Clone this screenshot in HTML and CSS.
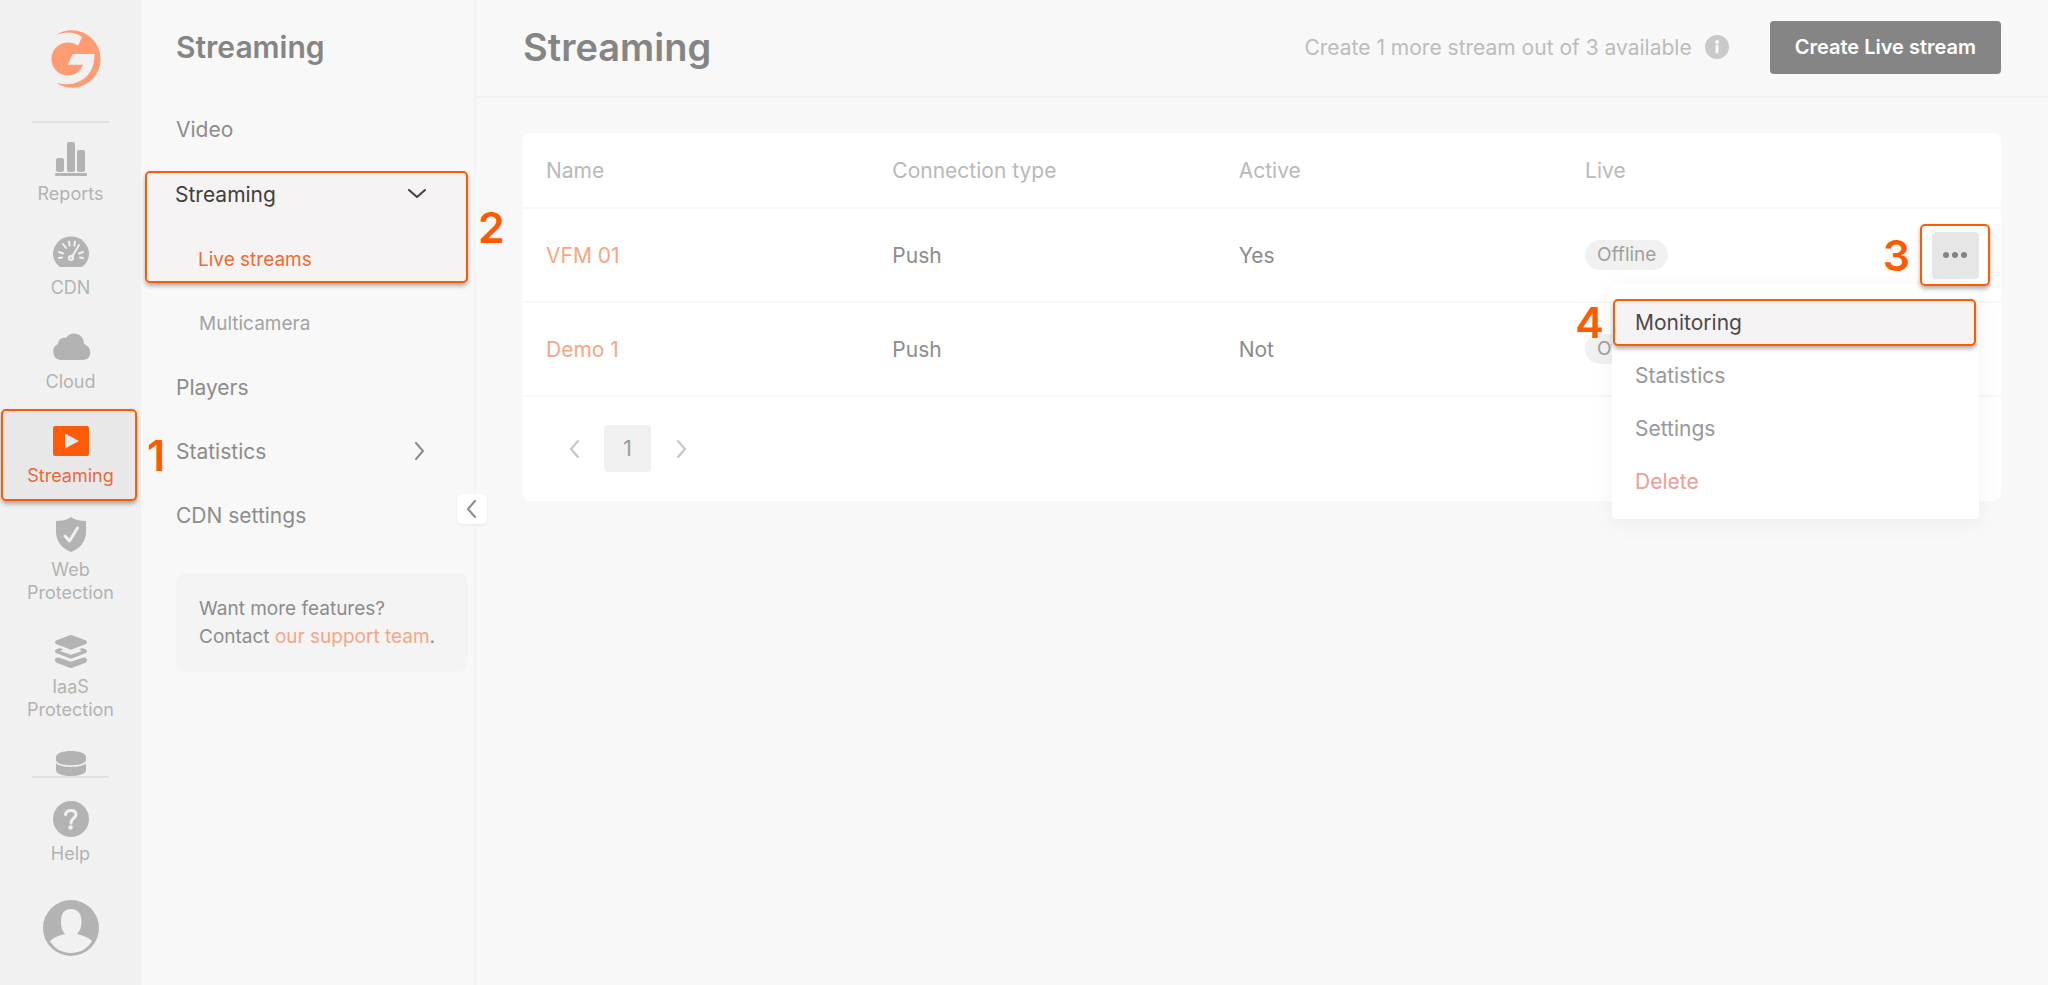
FILE: index.html
```html
<!DOCTYPE html>
<html lang="en">
<head>
    <meta charset="UTF-8">
    <meta name="viewport" content="width=device-width, initial-scale=1.0">
    <title>Streaming</title>
    <link rel="stylesheet" href="styles.css">
</head>
<body>
    <div class="container">

        <!-- ----------- Product rail ------------ -->
        <nav class="rail" aria-label="Products">
            <a href="#" class="logo" aria-label="Home">
                <svg viewBox="150 88 154 178"><path d="M168 106C183 95 200 92 215 92A85 85 0 0 1 300 177A85 85 0 0 1 215 262C196 262 181 256 170 248C226 262 283 235 282 162L217 162L203 194L248 194C240 215 222 226 203 226A49 49 0 0 1 154 177A49 49 0 0 1 203 128C215 128 225 131 233 138L245 112C225 96 195 94 168 106Z"/></svg>
            </a>
            <div class="rail-list">
                <a href="#" class="rail-item">
                    <svg viewBox="0 0 36 36"><rect x="3" y="17" width="8" height="14" rx="2"/><rect x="14" y="1" width="8" height="30" rx="2"/><rect x="24" y="9" width="8" height="22" rx="2"/><rect x="2" y="32" width="32" height="3" rx="1"/></svg>
                    <span>Reports</span>
                </a>
                <a href="#" class="rail-item">
                    <svg viewBox="0 0 36 36"><path d="M7 32C3 29 0 24 0 19A18 17.500 0 0 1 36 19C36 24 33 29 29 32Z"/><g class="cut"><path d="M6 23l3-.5M6 17l4 1.500M10 9l3 4M16 6.500l.6 4M22 6.500l-.7 4M30 23l-3-.5M30 17l-4 1.500"/><path d="M26 10l-7 12"/><circle cx="18" cy="23" r="2"/></g></svg>
                    <span>CDN</span>
                </a>
                <a href="#" class="rail-item">
                    <svg class="wide" viewBox="0 0 40 36"><path d="M9 31A8.500 8.500 0 0 1 7 15C7 11 11 8 15 9C20 1 33 4 33 15C42 18 41 31 32 31Z"/></svg>
                    <span>Cloud</span>
                </a>
                <a href="#" class="rail-item active marked">
                    <svg viewBox="0 0 36 36"><path fill-rule="evenodd" d="M2 3H34Q36 3 36 5V31Q36 33 34 33H2Q0 33 0 31V5Q0 3 2 3ZM12 10.500V25.500L26 18Z"/></svg>
                    <span>Streaming</span>
                    <b class="step step-1">1</b>
                </a>
                <a href="#" class="rail-item">
                    <svg viewBox="0 0 36 36"><path d="M18 0C22 3 28 4 33 4V15C33 25 26 32 18 35C10 32 3 25 3 15V4C8 4 14 3 18 0Z"/><path class="cut check" d="M12 19l4.500 5L24.500 11"/></svg>
                    <span>Web<br>Protection</span>
                </a>
                <a href="#" class="rail-item">
                    <svg viewBox="0 0 36 36"><path d="M16 1.500Q18 .5 20 1.500L33 6.500Q35 8 33 10L20 15Q18 16 16 15L3 10Q1 8 3 6.500Z"/><path d="M7 14L3 15.500Q1 17 3 19L16 24Q18 25 20 24L33 19Q35 17 33 15.500L29 14L26 15.500L29 17L19 20.500Q18 21 17 20.500L7 17L10 15.500Z"/><path d="M3 24Q5 23 7 24L16 27Q18 28 20 27L29 24Q31 23 33 24Q35 26 33 28.500L20 33.500Q18 34.500 16 33.500L3 28.500Q1 26 3 24Z"/></svg>
                    <span>IaaS<br>Protection</span>
                </a>
                <a href="#" class="rail-item">
                    <svg viewBox="0 0 36 36"><path d="M3 6C3 -2 33 -2 33 6V9C33 16 3 16 3 9Z"/><path d="M3 12.500C8 17 28 17 33 12.500V19C33 27 3 27 3 19Z"/></svg>
                    <span>Storage</span>
                </a>
            </div>
            <a href="#" class="rail-item help">
                <svg viewBox="0 0 36 36"><circle cx="18" cy="18" r="18"/><path class="cut question" d="M12.500 13.500C13 8 23 8 23 13.500C23 17 18 17.500 18 22"/><circle class="dot" cx="17.500" cy="26.500" r="2.200"/></svg>
                <span>Help</span>
            </a>
            <button type="button" class="avatar" aria-label="Account">
                <svg viewBox="0 0 56 56"><circle cx="28" cy="28" r="28"/><path class="face" d="M28 9C35 9 38.500 14 38.500 22C38.500 27 37 31 34 34C39 35 45 37 49 41C45 48 38 53 28 53C18 53 11 48 7 41C11 37 17 35 22 34C19 31 18 27 18 22C18 14 21 9 28 9Z"/></svg>
            </button>
        </nav>

        <!-- ----------- Sidebar ------------ -->
        <aside class="sidebar">
            <h2>Streaming</h2>
            <nav class="menu" aria-label="Streaming">
                <a href="#">Video</a>
                <div class="group marked">
                    <button type="button" aria-expanded="true">Streaming
                        <svg class="chevron" viewBox="0 0 18 18"><path d="M1 5l8 7 8-7"/></svg>
                    </button>
                    <a href="#" class="sub current">Live streams</a>
                    <b class="step step-2">2</b>
                </div>
                <a href="#" class="sub">Multicamera</a>
                <a href="#">Players</a>
                <button type="button" aria-expanded="false">Statistics
                    <svg class="chevron" viewBox="0 0 18 18"><path d="M6 1l7 8-7 8"/></svg>
                </button>
                <a href="#">CDN settings</a>
            </nav>
            <p class="support">Want more features?<br>Contact <a href="#">our support team</a>.</p>
            <button type="button" class="collapse" aria-label="Collapse menu">
                <svg class="chevron" viewBox="0 0 18 18"><path d="M12 1L5 9l7 8"/></svg>
            </button>
        </aside>

        <!-- ----------- Content ------------ -->
        <main class="content">
            <header class="topbar">
                <h1>Streaming</h1>
                <p class="quota">Create 1 more stream out of 3 available
                    <svg viewBox="0 0 24 24"><circle cx="12" cy="12" r="12"/><path class="cut" d="M12 11v6"/><circle class="dot" cx="12" cy="7" r="2"/></svg>
                </p>
                <button type="button" class="create">Create Live stream</button>
            </header>

            <section class="card">
                <table>
                    <thead>
                        <tr>
                            <th>Name</th>
                            <th>Connection type</th>
                            <th>Active</th>
                            <th class="live">Live</th>
                        </tr>
                    </thead>
                    <tbody>
                        <tr>
                            <td><a href="#">VFM 01</a></td>
                            <td>Push</td>
                            <td>Yes</td>
                            <td class="live">
                                <div class="live-cell">
                                    <span class="badge">Offline</span>
                                    <div class="actions">
                                        <div class="more-box marked">
                                            <button type="button" class="more" aria-label="Actions" aria-expanded="true">
                                                <svg viewBox="0 0 24 8"><circle cx="3" cy="4" r="3"/><circle cx="12" cy="4" r="3"/><circle cx="21" cy="4" r="3"/></svg>
                                            </button>
                                            <b class="step step-3">3</b>
                                        </div>
                                        <div class="dropdown">
                                            <button type="button" class="picked marked">Monitoring<b class="step step-4">4</b></button>
                                            <button type="button">Statistics</button>
                                            <button type="button">Settings</button>
                                            <button type="button" class="delete">Delete</button>
                                        </div>
                                    </div>
                                </div>
                            </td>
                        </tr>
                        <tr>
                            <td><a href="#">Demo 1</a></td>
                            <td>Push</td>
                            <td>Not</td>
                            <td class="live"><span class="badge">Offline</span></td>
                        </tr>
                    </tbody>
                </table>
                <div class="pagination">
                    <button type="button" aria-label="Previous page"><svg class="chevron" viewBox="0 0 18 18"><path d="M12 1L5 9l7 8"/></svg></button>
                    <button type="button" class="page">1</button>
                    <button type="button" aria-label="Next page"><svg class="chevron" viewBox="0 0 18 18"><path d="M6 1l7 8-7 8"/></svg></button>
                </div>
            </section>
        </main>
    </div>
</body>
</html>
```
FILE: styles.css
```css
*{
    margin: 0;
    padding: 0;
    box-sizing: border-box;
}
body{
    font-family: Inter, "Liberation Sans", sans-serif;
    font-size: 21px;
    color: #8c8c8c;
    background-color: #f8f8f8;
}
a{
    color: inherit;
    text-decoration: none;
}
button{
    font: inherit;
    color: inherit;
    background: none;
    border: none;
    cursor: pointer;
}
svg{
    display: block;
    flex-shrink: 0;
}
.container{
    display: flex;
    height: 100vh;
}
.chevron{
    width: 18px;
    height: 18px;
    fill: none;
    stroke: currentColor;
    stroke-width: 2;
    stroke-linecap: round;
    stroke-linejoin: round;
}

/* numbered highlights */
.marked{
    position: relative;
    border: 2px solid #ff5a00;
    border-radius: 5px;
    box-shadow: 0 3px 4px rgba(0, 0, 0, 0.3);
}
.step{
    position: absolute;
    font-size: 43px;
    line-height: 52px;
    font-weight: 600;
    color: #ff5a00;
}
.step-1{
    left: 144px;
    top: 18px;
}
.step-2{
    left: 331px;
    top: 28px;
}
.step-3{
    right: 78px;
    top: 3px;
}
.step-4{
    right: 370px;
    top: -5px;
}

/* rail */
.rail{
    display: flex;
    flex-direction: column;
    align-items: center;
    width: 141px;
    flex-shrink: 0;
    background-color: #f1f1f1;
    color: #b3b3b3;
    font-size: 18px;
    line-height: 23px;
    text-align: center;
    position: relative;
    z-index: 1;
}
.logo{
    padding: 29px 0 32px 10px;
}
.logo svg{
    width: 52px;
    height: 60px;
    fill: #ff9b72;
}
.rail-list{
    flex: 1;
    min-height: 0;
    width: 100%;
    padding-top: 5px;
    clip-path: inset(0 -40px 0 0);
}
.rail-list::before, .help::before{
    content: "";
    display: block;
    width: 77px;
    height: 2px;
    margin: -5px auto 3px;
    background-color: #e2e2e2;
}
.rail-item{
    display: flex;
    flex-direction: column;
    align-items: center;
    gap: 5px;
    padding: 15px 0;
}
.rail-item svg{
    width: 36px;
    height: 36px;
    fill: #b3b3b3;
}
.rail-item svg.wide{
    width: 40px;
}
.rail-item.marked{
    margin: 1px 4px 1px 1px;
    padding: 12px 0 12px 3px;
}
.rail-item.active{
    background-color: #e8e8e8;
    color: #e8683c;
}
.rail-item.active svg{
    fill: #ff5a0a;
}
.rail-item .cut{
    fill: none;
    stroke: #f1f1f1;
    stroke-width: 2;
    stroke-linecap: round;
    stroke-linejoin: round;
}
.rail-item .check, .rail-item .question{
    stroke-width: 3;
}
.rail-item .dot{
    fill: #f1f1f1;
}
.rail-item.help{
    padding: 0 0 35px;
}
.help::before{
    margin: 0 0 18px;
}
.avatar{
    margin-bottom: 29px;
}
.avatar svg{
    width: 56px;
    height: 56px;
    fill: #b3b3b3;
}
.avatar .face{
    fill: #f1f1f1;
}

/* sidebar */
.sidebar{
    position: relative;
    width: 335px;
    flex-shrink: 0;
    padding: 28px 6px 0 4px;
    border-right: 2px solid #f3f3f3;
}
.sidebar h2{
    padding-left: 31px;
    margin-bottom: 31px;
    font-size: 30px;
    line-height: 38px;
    font-weight: 600;
    color: #858585;
}
.menu a, .menu button{
    display: flex;
    align-items: center;
    justify-content: space-between;
    width: 100%;
    height: 64px;
    padding: 0 40px 0 31px;
    text-align: left;
}
.menu .sub{
    padding-left: 54px;
    font-size: 19px;
    color: #a3a3a3;
}
.group{
    height: 112px;
    margin: 10px 0 8px;
    background-color: #f5f3f4;
}
.menu .group button{
    height: 42px;
    padding-left: 28px;
    color: #3f3f41;
}
.menu .group a.sub{
    height: 42px;
    margin-top: 23px;
    padding-left: 51px;
    color: #ed6a36;
}
.support{
    margin: 26px 0 0 31px;
    padding: 22px 23px 21px;
    border-radius: 10px;
    background-color: #f4f4f4;
    font-size: 19px;
    line-height: 28px;
}
.support a, td a{
    color: #f4a684;
}
.collapse{
    position: absolute;
    right: -13px;
    top: 494px;
    display: flex;
    align-items: center;
    justify-content: center;
    width: 30px;
    height: 30px;
    border-radius: 5px;
    background-color: #fff;
    box-shadow: 0 1px 3px rgba(0, 0, 0, 0.08);
}

/* content */
.content{
    flex: 1;
    min-width: 0;
}
.topbar{
    display: flex;
    align-items: center;
    height: 98px;
    padding: 0 47px 2px;
    border-bottom: 2px solid #f2f2f2;
}
.topbar h1{
    font-size: 38px;
    line-height: 48px;
    font-weight: 600;
    color: #858585;
}
.quota{
    display: flex;
    align-items: center;
    gap: 13px;
    margin: 0 41px 0 auto;
    color: #bcbcbc;
}
.quota svg{
    width: 24px;
    height: 24px;
    fill: #c9c9c9;
}
.quota .cut{
    fill: none;
    stroke: #f8f8f8;
    stroke-width: 3;
    stroke-linecap: round;
}
.quota .dot{
    fill: #f8f8f8;
}
.create{
    height: 53px;
    padding: 0 25px;
    border-radius: 4px;
    background-color: #858585;
    color: #fff;
    font-size: 20px;
    font-weight: 600;
}
.card{
    margin: 35px 47px 0;
    border-radius: 8px;
    background-color: #fff;
}
table{
    width: 100%;
    table-layout: fixed;
    border-collapse: collapse;
}
th, td{
    height: 94px;
    padding-left: 23px;
    border-bottom: 2px solid #f7f7f7;
    text-align: left;
    font-weight: 400;
}
th{
    height: 75px;
    color: #b9b9b9;
}
.live{
    width: 29.7%;
}
.live-cell{
    display: flex;
    align-items: center;
    justify-content: space-between;
}
.badge{
    display: inline-block;
    padding: 0 12px;
    border-radius: 15px;
    background-color: #f1f1f1;
    color: #a0a0a0;
    font-size: 19px;
    line-height: 30px;
}
.actions{
    position: relative;
    margin-right: 11px;
}
.more-box{
    z-index: 2;
    display: flex;
    align-items: center;
    justify-content: center;
    width: 70px;
    height: 62px;
}
.more{
    display: flex;
    align-items: center;
    justify-content: center;
    width: 47px;
    height: 47px;
    border-radius: 4px;
    background-color: #e6e6e6;
}
.more svg{
    width: 24px;
    height: 8px;
    fill: #838383;
}
.dropdown{
    position: absolute;
    z-index: 1;
    top: 60px;
    right: 11px;
    width: 367px;
    padding: 12px 0 11px;
    border-radius: 5px;
    background-color: #fff;
    box-shadow: 0 4px 24px rgba(0, 0, 0, 0.05);
    color: #989898;
}
.dropdown button{
    display: block;
    width: 100%;
    height: 53px;
    padding-left: 23px;
    text-align: left;
}
.dropdown .picked{
    width: auto;
    min-width: calc(100% - 4px);
    height: 47px;
    margin: 3px 3px 3px 1px;
    padding-left: 20px;
    background-color: #f5f3f4;
    color: #4c4a4b;
}
.dropdown .delete{
    color: #ec9c99;
}
.pagination{
    display: flex;
    gap: 6px;
    padding: 28px 28px 29px;
    color: #c6c6c6;
}
.pagination button{
    display: flex;
    align-items: center;
    justify-content: center;
    width: 47px;
    height: 47px;
    border-radius: 4px;
}
.pagination .page{
    background-color: #f0f0f0;
    color: #989898;
}
```
